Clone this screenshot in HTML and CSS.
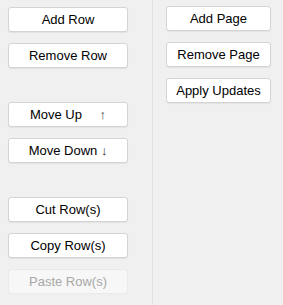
FILE: index.html
```html
<!DOCTYPE html>
<html lang="en">
<head>
    <meta charset="UTF-8">
    <title>Row and Page Tools</title>
    <link rel="stylesheet" href="styles.css">
</head>
<body>
    <div class="panel">
        <div class="col col-rows">
            <button class="btn">Add Row</button>
            <button class="btn">Remove Row</button>
            <button class="btn group-start">Move Up <span class="arrow up">↑</span></button>
            <button class="btn">Move Down <span class="arrow">↓</span></button>
            <button class="btn group-start">Cut Row(s)</button>
            <button class="btn">Copy Row(s)</button>
            <button class="btn" disabled>Paste Row(s)</button>
        </div>
        <div class="col col-pages">
            <button class="btn">Add Page</button>
            <button class="btn">Remove Page</button>
            <button class="btn">Apply Updates</button>
        </div>
    </div>
</body>
</html>
```

FILE: styles.css
```css
body {
    margin: 0;
    background: #f0f0f0;
    font-family: 'Liberation Sans', Arial, sans-serif;
    font-size: 13px;
    color: #000000;
}
.panel {
    display: flex;
    height: 305px;
}
.col {
    display: flex;
    flex-direction: column;
    gap: 11px;
}
.col-rows {
    width: 120px;
    padding: 7px 24px 0 8px;
    border-right: 1px solid #e2e2e2;
}
.col-pages {
    width: 105px;
    padding: 6px 0 0 13px;
}
.btn {
    height: 25px;
    padding: 0;
    background: #ffffff;
    border: 1px solid #d4d4d4;
    border-radius: 3px;
    box-shadow: 0 1px 1px rgba(0, 0, 0, 0.06);
    font-family: inherit;
    font-size: 13px;
    color: #000000;
    text-align: center;
}
.btn:disabled {
    background: #f7f7f7;
    border-color: #eaeaea;
    box-shadow: none;
    color: #a8a8a8;
}
.group-start {
    margin-top: 23px;
}
.arrow {
    color: #333333;
}
.arrow.up {
    margin-left: 14px;
}
```
